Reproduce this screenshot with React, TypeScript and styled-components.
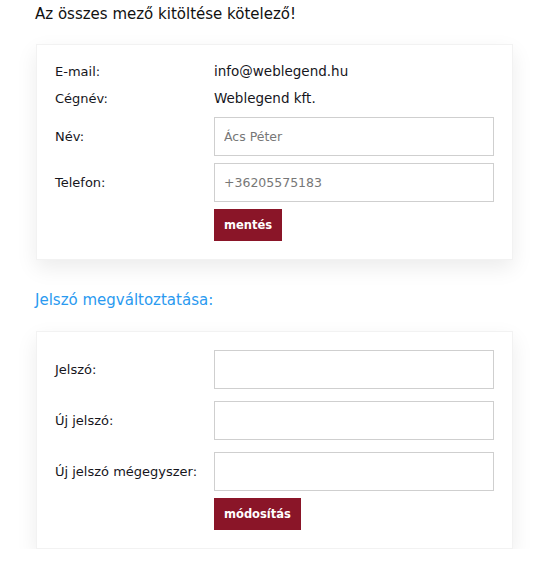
import React from 'react'
import styled, { createGlobalStyle } from 'styled-components'

const GlobalStyle = createGlobalStyle`
  html, body {
    margin: 0;
    padding: 0;
    background: #fff;
  }
  body {
    font-family: 'DejaVu Sans', 'Open Sans', sans-serif;
    color: #1e1e24;
  }
`

const profile = [
  { label: 'E-mail:', value: 'info@weblegend.hu' },
  { label: 'Cégnév:', value: 'Weblegend kft.' },
]

const App: React.FC = () => {
  return (
    <PageArea>
      <GlobalStyle />
      <Title>Az összes mező kitöltése kötelező!</Title>
      <Card $top={20} $pad={19}>
        <Stack $gap={7}>
          {profile.map((item) => (
            <InfoRow key={item.label}>
              <Label>{item.label}</Label>
              <Value>{item.value}</Value>
            </InfoRow>
          ))}
          <FieldRow $first>
            <Label>Név:</Label>
            <Input defaultValue="Ács Péter" />
          </FieldRow>
          <FieldRow>
            <Label>Telefon:</Label>
            <Input defaultValue="+36205575183" />
          </FieldRow>
          <FieldRow>
            <span />
            <Button>mentés</Button>
          </FieldRow>
        </Stack>
      </Card>
      <Heading>Jelszó megváltoztatása:</Heading>
      <Card $top={0} $pad={18}>
        <Stack $gap={12}>
          <FieldRow>
            <Label>Jelszó:</Label>
            <Input type="password" />
          </FieldRow>
          <FieldRow>
            <Label>Új jelszó:</Label>
            <Input type="password" />
          </FieldRow>
          <FieldRow>
            <Label>Új jelszó mégegyszer:</Label>
            <Input type="password" />
          </FieldRow>
          <ButtonRow>
            <span />
            <Button>módosítás</Button>
          </ButtonRow>
        </Stack>
      </Card>
    </PageArea>
  )
}

const PageArea = styled.div`
  width: 477px;
  padding: 4px 0 0 36px;
`

const Title = styled.div`
  margin-left: -1px;
  font-size: 15px;
  line-height: 20px;
  color: #111;
`

const Heading = styled.div`
  margin: 30px 0 21px -1px;
  font-size: 15px;
  line-height: 20px;
  color: #2a9af0;
`

const Card = styled.div<{ $top: number; $pad: number }>`
  margin-top: ${(p) => p.$top}px;
  padding: ${(p) => p.$pad}px 18px 18px;
  background: #fff;
  border: 1px solid #f2f2f2;
  box-shadow: 0 8px 20px rgba(0, 0, 0, 0.08);
`

const Stack = styled.div<{ $gap: number }>`
  display: flex;
  flex-direction: column;
  gap: ${(p) => p.$gap}px;
`

const InfoRow = styled.div`
  display: grid;
  grid-template-columns: 159px 1fr;
  align-items: center;
  height: 20px;
  &:first-child {
    margin-top: -3px;
  }
`

const FieldRow = styled.div<{ $first?: boolean }>`
  display: grid;
  grid-template-columns: 159px 1fr;
  align-items: center;
  margin-top: ${(p) => (p.$first ? 2 : 0)}px;
`

const ButtonRow = styled(FieldRow)`
  margin-top: -5px;
`

const Label = styled.span`
  font-size: 13px;
  color: #16161c;
`

const Value = styled.span`
  font-size: 13.5px;
  color: #16161c;
`

const Input = styled.input`
  box-sizing: border-box;
  width: 280px;
  height: 39px;
  padding: 0 9px;
  border: 1px solid #cfcfcf;
  border-radius: 0;
  font-family: inherit;
  font-size: 12.5px;
  color: #777;
  outline: none;
`

const Button = styled.button`
  justify-self: start;
  height: 32px;
  padding: 0 10px;
  border: none;
  background: #8a1528;
  color: #fff;
  font-family: inherit;
  font-size: 11.5px;
  font-weight: bold;
  cursor: pointer;
`

export default App
